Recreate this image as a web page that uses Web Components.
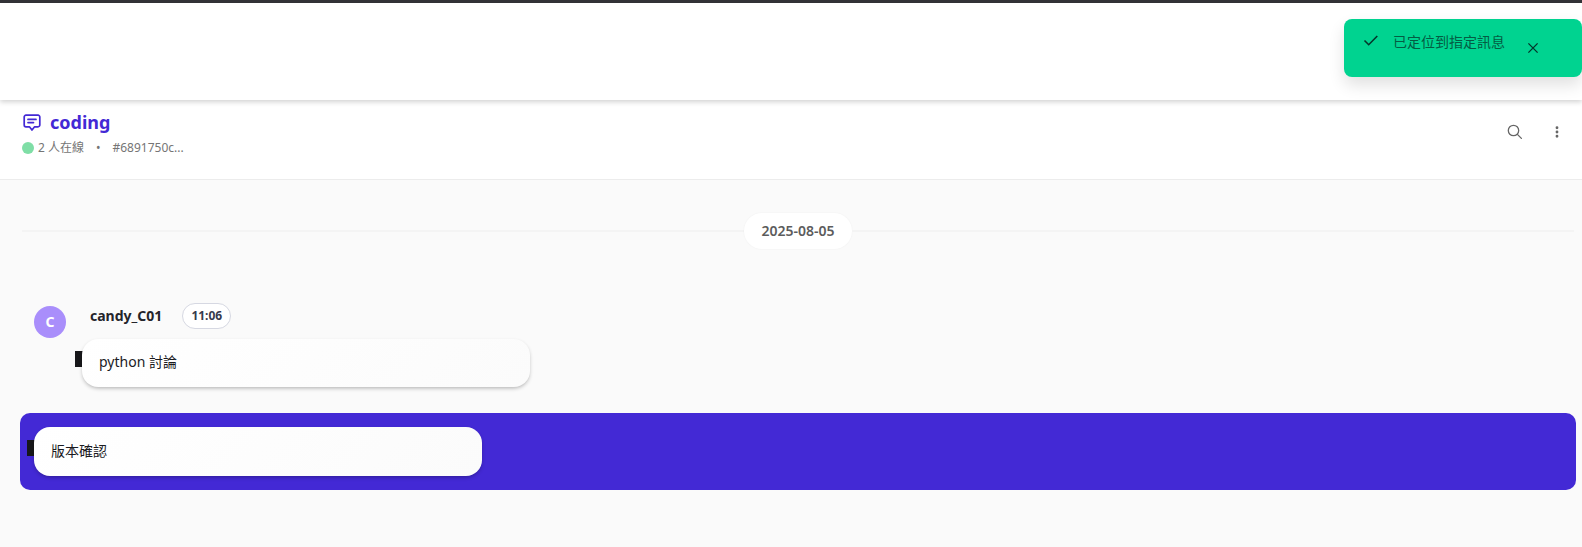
<!DOCTYPE html>
<html lang="zh-Hant"><head><meta charset="utf-8"><title>coding</title>
<style>
html,body{margin:0;height:100%;}
body{font-family:"Noto Sans","Noto Sans CJK TC",sans-serif;background:#fafafa;overflow:hidden;}
</style></head><body>
<app-shell></app-shell>
<template id="t-shell"><style>
:host{display:flex;flex-direction:column;height:547px;position:relative;overflow:hidden;background:#fafafa}
.top{height:3px;background:#333338;flex:none}
.bar{height:97px;background:#fff;flex:none;box-shadow:0 2px 5px rgba(0,0,0,.18);position:relative;z-index:2}
main{display:flex;flex-direction:column;flex:1;padding:33px 6px 0 20px}
</style>
<div class="top"></div><div class="bar"></div>
<chat-header></chat-header>
<main>
<date-divider>2025-08-05</date-divider>
<chat-message name="candy_C01" time="11:06" initial="C">python 討論</chat-message>
<chat-message highlighted>版本確認</chat-message>
</main>
<toast-note>已定位到指定訊息</toast-note></template>

<template id="t-header"><style>
:host{display:flex;justify-content:space-between;height:80px;flex:none;box-sizing:border-box;background:#fff;border-bottom:1px solid #ececec;padding:9px 15px 0 22px}
.title{display:flex;align-items:center;gap:8px;height:26px;color:#4329d5;font-size:18px;font-weight:700;line-height:26px}
svg{display:block}
.title svg{margin-top:2px}
.sub{display:flex;align-items:center;height:20px;margin-top:3px;font-size:12px;color:#757575;line-height:20px}
.dot{width:12px;height:12px;border-radius:50%;background:#7fdea6;margin-right:4px}
.sep{margin:0 12px 0 12px}
.acts{display:flex;gap:22px;padding-top:13px;color:#666}
.acts svg{width:20px;height:20px}
</style>
<div><div class="title"><svg width="20" height="20" viewBox="0 0 20 20" fill="none" stroke="currentColor" stroke-width="1.7" stroke-linejoin="round" stroke-linecap="round"><path d="M4 2.2h12a1.8 1.8 0 0 1 1.8 1.8v8a1.8 1.8 0 0 1-1.8 1.8h-3.4L10 17l-2.6-3.2H4A1.8 1.8 0 0 1 2.2 12V4A1.8 1.8 0 0 1 4 2.2z"/><path d="M6 6.4h8M6 9.6h5.5"/></svg><span>coding</span></div>
<div class="sub"><span class="dot"></span><span>2 人在線</span><span class="sep">•</span><span>#6891750c...</span></div></div>
<div class="acts"><svg viewBox="0 0 20 20" fill="none" stroke="currentColor" stroke-width="1.3" stroke-linecap="round"><circle cx="8.5" cy="8.5" r="5.2"/><path d="M12.4 12.4l4 4"/></svg><svg viewBox="0 0 24 24" fill="currentColor"><path d="M12 8a2 2 0 1 0 0-4 2 2 0 0 0 0 4zm0 2a2 2 0 1 0 0 4 2 2 0 0 0 0-4zm0 6a2 2 0 1 0 0 4 2 2 0 0 0 0-4z" transform="translate(12 12) scale(.85) translate(-12 -12)"/></svg></div></template>

<template id="t-date"><style>
:host{display:flex;align-items:center;height:36px;margin-bottom:54px;padding:0 2px}
i{flex:1;height:2px;background:#f4f4f4}
span{flex:none;width:108px;height:36px;box-sizing:border-box;border-radius:18px;background:#fff;box-shadow:0 0 2px rgba(0,0,0,.05);color:#5c5c5c;font-size:14px;font-weight:600;line-height:36px;text-align:center}
</style><i></i><span><slot></slot></span><i></i></template>

<template id="t-msg"><style>
:host{display:block;color:#1b1b1f;font-size:14px}
.row{display:grid;grid-template-columns:32px auto;column-gap:16px;padding:0 0 26px 14px}
.av{width:32px;height:32px;border-radius:50%;background:#a98efb;color:#fff;font-size:14px;font-weight:700;line-height:32px;text-align:center;margin-top:3px}
.head{display:flex;align-items:center;height:26px;gap:20px;margin-left:8px;margin-bottom:10px}
.name{font-size:14px;font-weight:700;color:#24242a;line-height:25px;height:26px}
.time{width:49px;height:26px;box-sizing:border-box;border:1px solid #d6d8e2;border-radius:13px;background:#fff;font-size:12px;font-weight:700;color:#363a4d;line-height:24px;text-align:center}
.wrap{position:relative;width:448px}
.bub{box-sizing:border-box;width:448px;height:48px;padding:0 17px;border-radius:16px;background:#fff;background-image:linear-gradient(135deg,#fff,#fbfbfb);box-shadow:0 2px 4px -1px rgba(0,0,0,.32);line-height:45px;position:relative}
.mark{position:absolute;left:-7px;top:12px;width:8px;height:16px;background:#17171a}
:host([highlighted]) .row{display:block;background:#4329d5;border-radius:10px;padding:14px;height:77px;box-sizing:border-box}
:host([highlighted]) .bub{height:49px;line-height:48px}
:host([highlighted]) .mark{top:13px}
:host([highlighted]) .av,:host([highlighted]) .head{display:none}
</style><div class="row"><div class="av"></div><div><div class="head"><span class="name"></span><span class="time"></span></div>
<div class="wrap"><span class="mark"></span><div class="bub"><slot></slot></div></div></div></div></template>

<template id="t-toast"><style>
:host{position:absolute;z-index:5;left:1344px;top:19px;width:238px;height:58px;box-sizing:border-box;background:#00d390;border-radius:8px;box-shadow:0 8px 16px rgba(0,0,0,.12);color:#045c43;font-size:14px;display:block}
.ck{position:absolute;left:18px;top:12px;color:#04352a}
.tx{position:absolute;left:49px;top:12px;line-height:22px;white-space:nowrap}
.x{position:absolute;left:181px;top:21px;color:#04352a}
svg{display:block}
</style><svg class="ck" width="18" height="18" viewBox="0 0 18 18" fill="none" stroke="currentColor" stroke-width="1.6"><path d="M2.5 9.5l4.2 4.2L15.3 5"/></svg><span class="tx"><slot></slot></span><svg class="x" width="16" height="16" viewBox="0 0 16 16" fill="none" stroke="currentColor" stroke-width="1.3"><path d="M3.4 3.4l9.2 9.2M12.6 3.4l-9.2 9.2"/></svg></template>

<script>
class Base extends HTMLElement{
  constructor(){super();this.attachShadow({mode:'open'}).append(document.getElementById(this.constructor.tpl).content.cloneNode(true));}
}
customElements.define('app-shell',class extends Base{static tpl='t-shell'});
customElements.define('chat-header',class extends Base{static tpl='t-header'});
customElements.define('date-divider',class extends Base{static tpl='t-date'});
customElements.define('toast-note',class extends Base{static tpl='t-toast'});
customElements.define('chat-message',class extends Base{static tpl='t-msg';
  connectedCallback(){const s=this.shadowRoot;
    s.querySelector('.av').textContent=this.getAttribute('initial')||'';
    s.querySelector('.name').textContent=this.getAttribute('name')||'';
    s.querySelector('.time').textContent=this.getAttribute('time')||'';}
});
</script>
</body></html>
